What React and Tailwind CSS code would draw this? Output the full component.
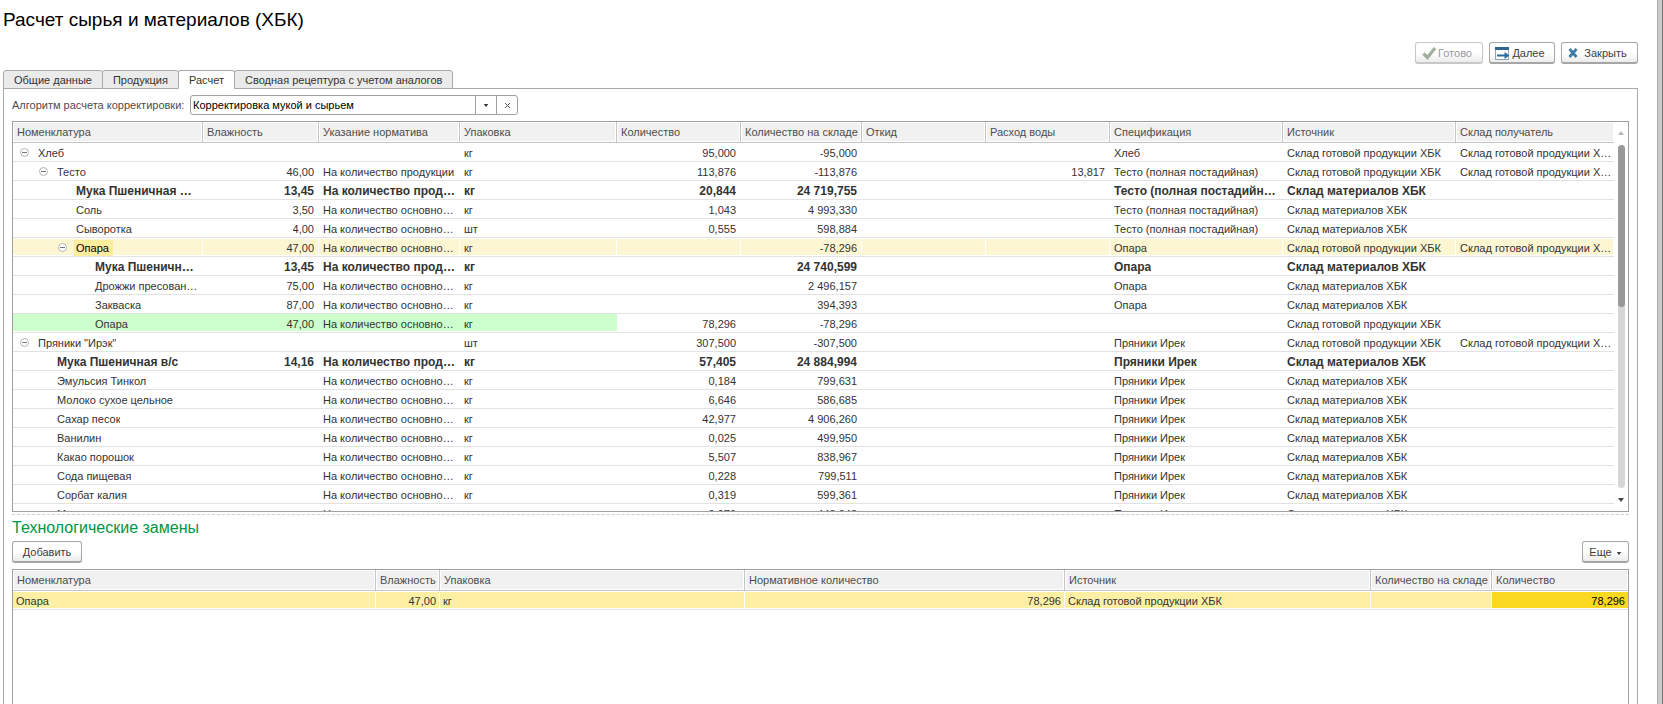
import React, { useState } from "react";
import clsx from "clsx";

const STOCK_READY = "Склад готовой продукции ХБК";
const STOCK_RAW = "Склад материалов ХБК";
const BY_PRODUCT = "На количество продукции";
const BY_MAIN = "На количество основного сырья";
const DOUGH = "Тесто (полная постадийная)";

const tabs = [
  "Общие данные",
  "Продукция",
  "Расчет",
  "Сводная рецептура с учетом аналогов",
];

const columns = [
  { key: "name", title: "Номенклатура", width: "w-[190px]" },
  { key: "humidity", title: "Влажность", width: "w-[116px]", number: true },
  { key: "norm", title: "Указание норматива", width: "w-[141px]" },
  { key: "unit", title: "Упаковка", width: "w-[157px]" },
  { key: "qty", title: "Количество", width: "w-[124px]", number: true },
  { key: "stock", title: "Количество на складе", width: "w-[121px]", number: true },
  { key: "waste", title: "Откид", width: "w-[124px]", number: true },
  { key: "water", title: "Расход воды", width: "w-[124px]", number: true },
  { key: "spec", title: "Спецификация", width: "w-[173px]" },
  { key: "source", title: "Источник", width: "w-[173px]" },
  { key: "target", title: "Склад получатель", width: "w-[158px]" },
];

const rows = [
  { level: 0, group: true, name: "Хлеб", unit: "кг", qty: "95,000", stock: "-95,000", spec: "Хлеб", source: STOCK_READY, target: STOCK_READY },
  { level: 1, group: true, name: "Тесто", humidity: "46,00", norm: BY_PRODUCT, unit: "кг", qty: "113,876", stock: "-113,876", water: "13,817", spec: DOUGH, source: STOCK_READY, target: STOCK_READY },
  { level: 2, bold: true, name: "Мука Пшеничная в/с", humidity: "13,45", norm: BY_PRODUCT, unit: "кг", qty: "20,844", stock: "24 719,755", spec: DOUGH, source: STOCK_RAW },
  { level: 2, name: "Соль", humidity: "3,50", norm: BY_MAIN, unit: "кг", qty: "1,043", stock: "4 993,330", spec: DOUGH, source: STOCK_RAW },
  { level: 2, name: "Сыворотка", humidity: "4,00", norm: BY_MAIN, unit: "шт", qty: "0,555", stock: "598,884", spec: DOUGH, source: STOCK_RAW },
  { level: 2, group: true, selected: true, name: "Опара", humidity: "47,00", norm: BY_MAIN, unit: "кг", stock: "-78,296", spec: "Опара", source: STOCK_READY, target: STOCK_READY },
  { level: 3, bold: true, name: "Мука Пшеничная в/с", humidity: "13,45", norm: BY_PRODUCT, unit: "кг", stock: "24 740,599", spec: "Опара", source: STOCK_RAW },
  { level: 3, name: "Дрожжи пресованные", humidity: "75,00", norm: BY_MAIN, unit: "кг", stock: "2 496,157", spec: "Опара", source: STOCK_RAW },
  { level: 3, name: "Закваска", humidity: "87,00", norm: BY_MAIN, unit: "кг", stock: "394,393", spec: "Опара", source: STOCK_RAW },
  { level: 3, replaced: true, name: "Опара", humidity: "47,00", norm: BY_MAIN, unit: "кг", qty: "78,296", stock: "-78,296", source: STOCK_READY },
  { level: 0, group: true, name: 'Пряники "Ирэк"', unit: "шт", qty: "307,500", stock: "-307,500", spec: "Пряники Ирек", source: STOCK_READY, target: STOCK_READY },
  { level: 1, bold: true, name: "Мука Пшеничная в/с", humidity: "14,16", norm: BY_PRODUCT, unit: "кг", qty: "57,405", stock: "24 884,994", spec: "Пряники Ирек", source: STOCK_RAW },
  { level: 1, name: "Эмульсия Тинкол", norm: BY_MAIN, unit: "кг", qty: "0,184", stock: "799,631", spec: "Пряники Ирек", source: STOCK_RAW },
  { level: 1, name: "Молоко сухое цельное", norm: BY_MAIN, unit: "кг", qty: "6,646", stock: "586,685", spec: "Пряники Ирек", source: STOCK_RAW },
  { level: 1, name: "Сахар песок", norm: BY_MAIN, unit: "кг", qty: "42,977", stock: "4 906,260", spec: "Пряники Ирек", source: STOCK_RAW },
  { level: 1, name: "Ванилин", norm: BY_MAIN, unit: "кг", qty: "0,025", stock: "499,950", spec: "Пряники Ирек", source: STOCK_RAW },
  { level: 1, name: "Какао порошок", norm: BY_MAIN, unit: "кг", qty: "5,507", stock: "838,967", spec: "Пряники Ирек", source: STOCK_RAW },
  { level: 1, name: "Сода пищевая", norm: BY_MAIN, unit: "кг", qty: "0,228", stock: "799,511", spec: "Пряники Ирек", source: STOCK_RAW },
  { level: 1, name: "Сорбат калия", norm: BY_MAIN, unit: "кг", qty: "0,319", stock: "599,361", spec: "Пряники Ирек", source: STOCK_RAW },
  { level: 1, name: "Маргарин", norm: BY_MAIN, unit: "кг", qty: "9,979", stock: "448,948", spec: "Пряники Ирек", source: STOCK_RAW },
];

const replacementColumns = [
  { key: "name", title: "Номенклатура", width: "w-[363px]" },
  { key: "humidity", title: "Влажность", width: "w-[64px]", number: true },
  { key: "unit", title: "Упаковка", width: "w-[305px]" },
  { key: "norm", title: "Нормативное количество", width: "w-[320px]", number: true },
  { key: "source", title: "Источник", width: "w-[306px]" },
  { key: "stock", title: "Количество на складе", width: "w-[121px]", number: true },
  { key: "qty", title: "Количество", width: "w-[136px]", number: true },
];

const replacements = [
  { name: "Опара", humidity: "47,00", unit: "кг", norm: "78,296", source: STOCK_READY, qty: "78,296" },
];

// Отступы уровней дерева
const levelPadding = ["pl-[7px]", "pl-[26px]", "pl-[45px]", "pl-16"];

// Подсвеченные (замененные) ячейки
const replacedKeys = ["name", "humidity", "norm", "unit"];

const Button = ({ className, children, disabled, ...props }) => (
  <button
    type="button"
    disabled={disabled}
    className={clsx(
      "flex h-[22px] items-center justify-center rounded-[3px] border border-b-2 bg-linear-to-b from-white from-50% to-[#ececec] whitespace-nowrap",
      disabled ? "border-[#c8c8c8] text-[#999]" : "border-[#a6a6a6] text-[#404040]",
      className
    )}
    {...props}
  >
    {children}
  </button>
);

const CheckIcon = () => (
  <svg width="15" height="14" viewBox="0 0 15 14">
    <path d="M1.5 7.5 L5.5 11.5 L13 2" fill="none" stroke="#9fb09f" strokeWidth="3.2" />
  </svg>
);

const NextIcon = () => (
  <svg width="15" height="14" viewBox="0 0 15 14">
    <path d="M0.5 1.5 H13.5 V13.5 H0.5 Z" fill="#fff" stroke="#8fa3b3" />
    <path d="M0 1 H14 V4 H0 Z" fill="#2f6690" />
    <path d="M2 8.5 H9.5 V6 L14.5 9.5 L9.5 13 V10.5 H2 Z" fill="#2d6e9e" />
  </svg>
);

const CloseIcon = () => (
  <svg width="10" height="10" viewBox="0 0 10 10">
    <path d="M1.5 1 L8.5 9 M8.5 1 L1.5 9" stroke="#3d7ba8" strokeWidth="2.8" />
  </svg>
);

const CollapseIcon = () => (
  <svg width="9" height="9" viewBox="0 0 9 9">
    <circle cx="4.5" cy="4.5" r="4" fill="#fff" stroke="#b4b4b4" />
    <path d="M2 4.5 H7" stroke="#777" />
  </svg>
);

const Arrow = ({ up, className }) => (
  <svg width="6" height="4" viewBox="0 0 6 4" className={className}>
    <path d={up ? "M0 4 L3 0 L6 4 Z" : "M0 0 H6 L3 4 Z"} fill="currentColor" />
  </svg>
);

const TableHead = ({ items }) => (
  <thead>
    <tr>
      {items.map((col, index) => (
        <th
          key={col.key}
          scope="col"
          className={clsx(
            "border-b border-[#c4c4c4] p-px text-left font-normal text-[#4d4d4d]",
            col.width,
            index < items.length - 1 && "border-r"
          )}
        >
          <div className="h-[18px] truncate bg-[#f1f1f1] pl-[3px] leading-[18px]">
            {col.title}
          </div>
        </th>
      ))}
    </tr>
  </thead>
);

const CalculationTable = () => (
  <table className="w-full table-fixed border-separate border-spacing-0">
    <TableHead items={columns} />
    <tbody>
      {rows.map((row, index) => (
        <tr key={index} className={clsx(row.bold && "text-xs font-bold")}>
          {columns.map((col) => {
            const isName = col.key === "name";
            const green = row.replaced && replacedKeys.includes(col.key);
            return (
              <td key={col.key} className="border-b border-[#e2e2e2] p-0">
                <div
                  className={clsx(
                    "mb-px flex h-[17px] items-center border-t border-r pt-px leading-4",
                    green ? "border-[#ccffcc] bg-[#ccffcc]" : "border-white",
                    row.selected && "bg-[#fdf6d2]",
                    isName ? levelPadding[row.level] : "pl-1",
                    isName && row.bold && "pr-1.5",
                    !isName && col.key !== "target" && "pr-1",
                    col.number && "justify-end"
                  )}
                >
                  {isName && (
                    <span className="mr-[7px] flex w-[9px] shrink-0">
                      {row.group && (
                        <button type="button" aria-label="Свернуть">
                          <CollapseIcon />
                        </button>
                      )}
                    </span>
                  )}
                  <span
                    className={clsx(
                      "truncate",
                      isName && "pl-0.5",
                      isName && row.selected && "bg-[#fdee9f] pr-1 text-black"
                    )}
                  >
                    {row[col.key]}
                  </span>
                </div>
              </td>
            );
          })}
        </tr>
      ))}
    </tbody>
  </table>
);

const ReplacementTable = () => (
  <table className="w-full table-fixed border-separate border-spacing-0">
    <TableHead items={replacementColumns} />
    <tbody>
      {replacements.map((row, index) => (
        <tr key={index}>
          {replacementColumns.map((col) => (
            <td key={col.key} className="border-b border-[#e2e2e2] p-0">
              <div
                className={clsx(
                  "mb-px h-[17px] truncate border-t border-white px-[3px] leading-[18px]",
                  col.number && "text-right",
                  col.key === "qty" ? "bg-[#fbd920] text-black" : "border-r bg-[#fdf0a4]"
                )}
              >
                {row[col.key]}
              </div>
            </td>
          ))}
        </tr>
      ))}
    </tbody>
  </table>
);

export default function App() {
  const [activeTab, setActiveTab] = useState("Расчет");
  const [algorithm, setAlgorithm] = useState("Корректировка мукой и сырьем");

  return (
    <div className="flex h-screen overflow-hidden bg-white font-['Liberation_Sans',Arial,sans-serif] text-[11px] leading-4 text-[#333]">
      <main className="flex min-w-0 flex-1 flex-col pr-[19px] pl-[3px]">
        <h1 className="pb-0.5 text-[19px] leading-10 text-black">
          Расчет сырья и материалов (ХБК)
        </h1>

        <div className="flex justify-end gap-1.5">
          <Button disabled className="w-[68px] gap-px pr-1">
            <CheckIcon />
            Готово
          </Button>
          <Button className="w-[66px] gap-0.5 pr-1">
            <NextIcon />
            Далее
          </Button>
          <Button className="w-[77px] gap-1.5 pr-1">
            <CloseIcon />
            Закрыть
          </Button>
        </div>

        {/* Закладки */}
        <div role="tablist" className="relative mt-1.5 -mb-px flex">
          {tabs.map((tab, index) => (
            <button
              key={tab}
              type="button"
              role="tab"
              aria-selected={tab === activeTab}
              onClick={() => setActiveTab(tab)}
              className={clsx(
                "h-[19px] rounded-t-[3px] border border-[#a9a9a9] px-2.5 leading-[18px]",
                index > 0 && "-ml-px",
                tab === activeTab ? "border-b-white bg-white" : "bg-[#ebebeb]"
              )}
            >
              {tab}
            </button>
          ))}
        </div>

        <section className="flex min-h-0 flex-1 flex-col border border-b-0 border-[#a9a9a9] px-2 pt-1.5">
          <div className="flex items-center">
            <label htmlFor="algorithm" className="w-[178px] whitespace-nowrap text-[#4d4d4d]">
              Алгоритм расчета корректировки:
            </label>
            <div className="flex h-5 w-[328px] rounded-[3px] border border-[#a0a0a0]">
              <input
                id="algorithm"
                type="text"
                value={algorithm}
                onChange={(e) => setAlgorithm(e.target.value)}
                className="min-w-0 flex-1 px-0.5 text-black outline-none"
              />
              <button
                type="button"
                aria-label="Выбрать"
                className="flex w-[21px] items-center justify-center border-l border-[#a0a0a0]"
              >
                <Arrow className="h-[3px]" />
              </button>
              <button
                type="button"
                aria-label="Очистить"
                onClick={() => setAlgorithm("")}
                className="flex w-[21px] items-center justify-center border-l border-[#a0a0a0]"
              >
                <svg width="5" height="5" viewBox="0 0 5 5">
                  <path d="M0 0 L5 5 M5 0 L0 5" stroke="#555" />
                </svg>
              </button>
            </div>
          </div>

          <div className="mt-1.5 flex h-[391px] shrink-0 overflow-hidden border border-[#a0a0a0]">
            <div className="min-w-0 flex-1 overflow-hidden">
              <CalculationTable />
            </div>
            {/* Полоса прокрутки */}
            <div className="flex w-3.5 flex-col items-center pt-[9px] pb-[9px]">
              <Arrow up className="text-[#b8b8b8]" />
              <div className="mt-2.5 mb-2.5 w-[7px] flex-1 rounded-full bg-[#d6d6d6]">
                <div className="h-[162px] rounded-full bg-[#999]" />
              </div>
              <Arrow className="text-[#444]" />
            </div>
          </div>

          <div className="mt-0.5 border-t border-dashed border-[#cfcfcf]" />

          <h2 className="text-base leading-[26px] text-[#009646]">
            Технологические замены
          </h2>
          <div className="mb-1.5 flex justify-between">
            <Button className="w-[70px]">Добавить</Button>
            <Button className="w-[47px] gap-1">
              Еще
              <Arrow className="mt-1 h-[3px]" />
            </Button>
          </div>

          <div className="min-h-0 flex-1 overflow-hidden border border-b-0 border-[#a0a0a0]">
            <ReplacementTable />
          </div>
        </section>
      </main>

      <div className="w-1.5 border-r border-l border-r-[#777] border-l-[#aaa] bg-[#cbcbcb]" />
    </div>
  );
}
